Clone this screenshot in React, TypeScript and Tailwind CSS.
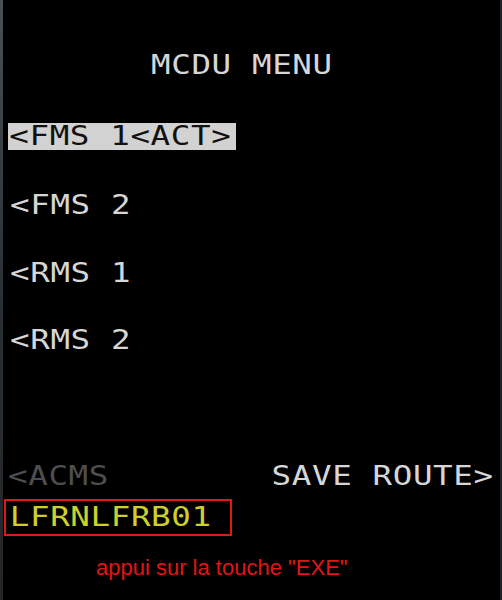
import React from 'react';

const mono = "inline-block font-['DejaVu_Sans_Mono',monospace] text-[26px] leading-[27px] tracking-[0.5px] whitespace-pre scale-x-125";

interface RowProps {
  label: string;
  className?: string;
}

const MenuRow: React.FC<RowProps> = ({ label, className = '' }) => (
  <div className={`pl-[7px] ${className}`}>
    <span className={`${mono} origin-left text-[#d6d6d6]`}>{label}</span>
  </div>
);

export default function App() {
  return (
    <div className="w-[502px] h-[600px] bg-black flex overflow-hidden">
      <div className="w-[3px] h-full bg-gradient-to-b from-[#4a5056] via-[#2a2f33] to-[#23272a]" />
      <div className="flex-1 flex flex-col">
        <div className="mt-[52px] pl-[148px]">
          <span className={`${mono} origin-left text-[#d6d6d6]`}>MCDU MENU</span>
        </div>

        <div className="mt-[43px] ml-[5px] w-[228px] h-[27px] bg-[#d2d2d2] flex items-center">
          <span className={`${mono} origin-left pl-[1px] text-[#111]`}>&lt;FMS 1&lt;ACT&gt;</span>
        </div>

        <MenuRow label="<FMS 2" className="mt-[42px]" />
        <MenuRow label="<RMS 1" className="mt-[40px]" />
        <MenuRow label="<RMS 2" className="mt-[39px]" />

        <div className="mt-[108px] flex justify-between pr-[6px]">
          <span className={`${mono} origin-left pl-[4px] text-[#4e4e4e]`}>&lt;ACMS</span>
          <span className={`${mono} origin-right text-[#d6d6d6]`}>SAVE ROUTE&gt;</span>
        </div>

        <div className="mt-[9px] ml-[1px] w-[228px] h-[37px] border-2 border-[#e01818] flex items-center">
          <span className={`${mono} origin-left pl-[3px] text-[#cfcf2a]`}>LFRNLFRB01</span>
        </div>

        <div className="mt-[19px] pl-[93px] font-['Liberation_Sans',Arial,sans-serif] text-[22px] leading-[26px] text-[#e41414]">
          appui sur la touche "EXE"
        </div>
      </div>
      <div className="w-[2px] h-full bg-[#1e2226]" />
    </div>
  );
}
